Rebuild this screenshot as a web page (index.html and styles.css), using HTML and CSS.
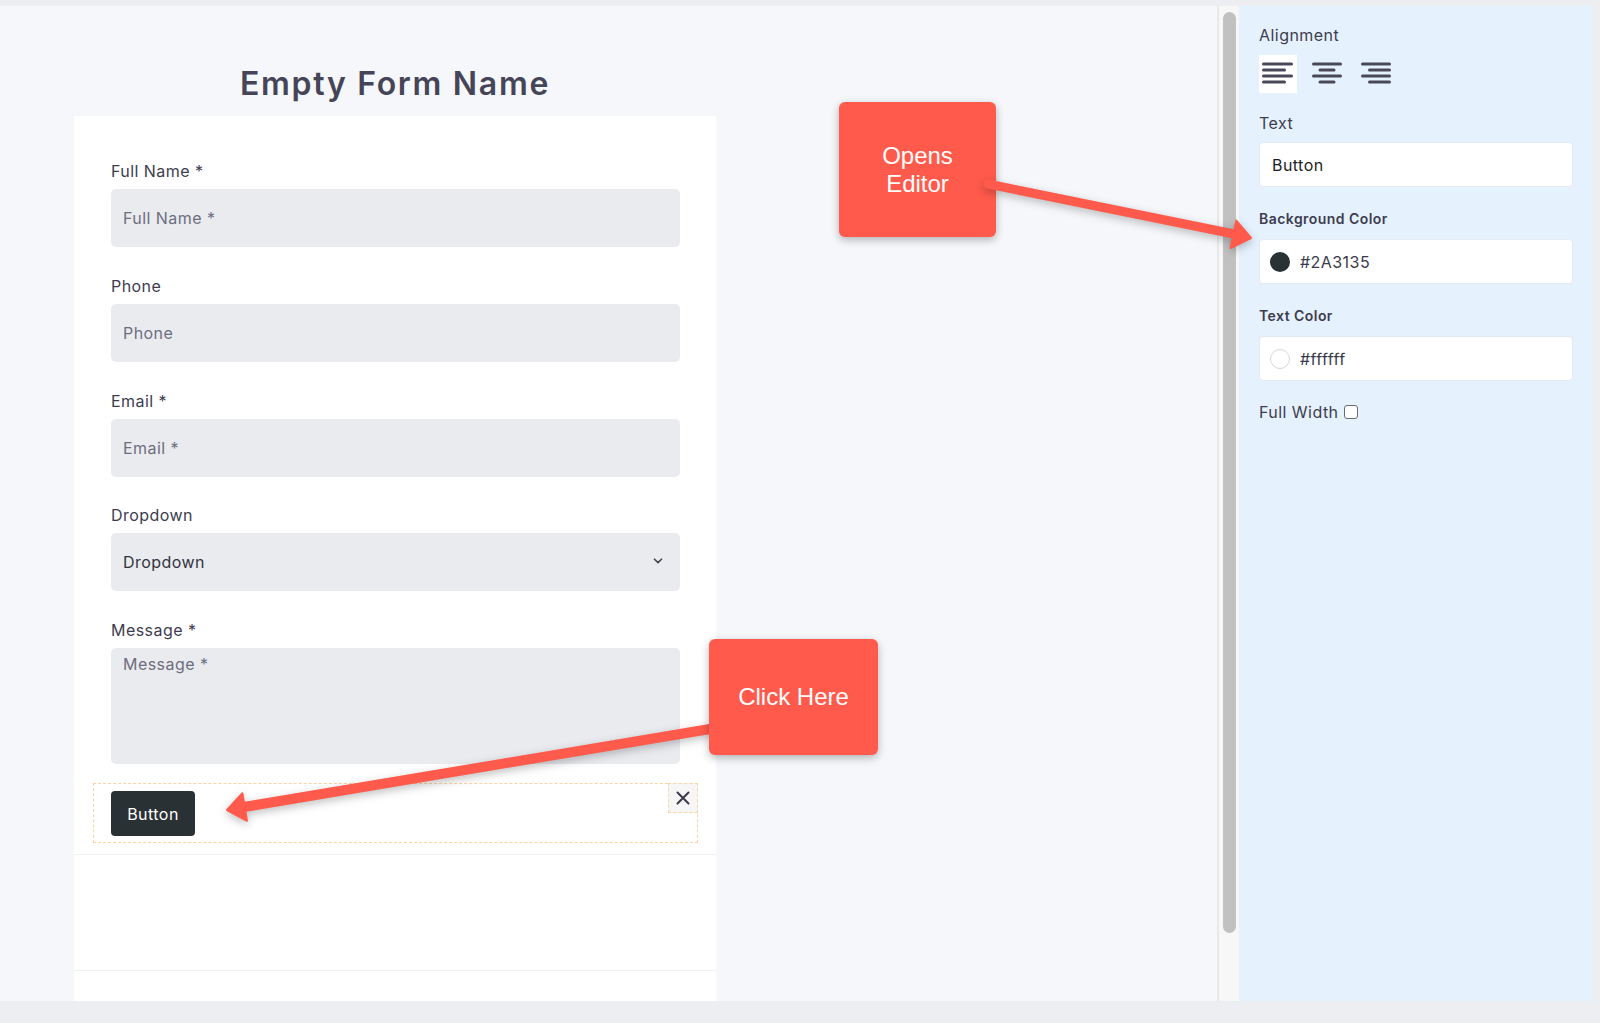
FILE: index.html
```html
<!DOCTYPE html>
<html lang="en">
<head>
<meta charset="utf-8">
<title>Form Builder</title>
<link rel="stylesheet" href="styles.css">
</head>
<body>
<div class="app">
  <div class="topbar"></div>
  <div class="main">
    <div class="canvas">
      <div class="form-col">
        <h1 class="form-title">Empty Form Name</h1>
        <div class="card">
          <div class="form-section">
            <div class="fields">
              <div class="field">
                <div class="label">Full Name *</div>
                <div class="input placeholder">Full Name *</div>
              </div>
              <div class="field">
                <div class="label">Phone</div>
                <div class="input placeholder">Phone</div>
              </div>
              <div class="field">
                <div class="label">Email *</div>
                <div class="input placeholder">Email *</div>
              </div>
              <div class="field">
                <div class="label">Dropdown</div>
                <div class="input select">
                  <span>Dropdown</span>
                  <svg class="chevron" width="10" height="6" viewBox="0 0 10 6"><polyline points="1.5,1.2 5,4.6 8.5,1.2" fill="none" stroke="#44444f" stroke-width="1.6" stroke-linecap="round" stroke-linejoin="round"/></svg>
                </div>
              </div>
              <div class="field">
                <div class="label">Message *</div>
                <div class="input textarea placeholder">Message *</div>
              </div>
            </div>
            <div class="button-row">
              <button class="btn" type="button">Button</button>
              <span class="close">
                <svg width="14" height="14" viewBox="0 0 14 14"><path d="M1.5 1.5 L12.5 12.5 M12.5 1.5 L1.5 12.5" stroke="#3b3b4b" stroke-width="2" stroke-linecap="round"/></svg>
              </span>
            </div>
          </div>
          <div class="card-section"></div>
          <div class="card-rest"></div>
        </div>
      </div>
    </div>
    <div class="scroll"><div class="thumb"></div></div>
    <aside class="panel">
      <div class="plabel">Alignment</div>
      <div class="align-row">
        <span class="align-btn active">
          <svg width="38" height="38" viewBox="0 0 38 38"><rect x="3" y="7.5" width="31" height="3" rx="1.5"/><rect x="3" y="13.5" width="24" height="3" rx="1.5"/><rect x="3" y="19.5" width="31" height="3" rx="1.5"/><rect x="3" y="25.5" width="24" height="3" rx="1.5"/></svg>
        </span>
        <span class="align-btn">
          <svg width="38" height="38" viewBox="0 0 38 38"><rect x="4" y="7.5" width="30" height="3" rx="1.5"/><rect x="10.5" y="13.5" width="17" height="3" rx="1.5"/><rect x="4" y="19.5" width="30" height="3" rx="1.5"/><rect x="10.5" y="25.5" width="17" height="3" rx="1.5"/></svg>
        </span>
        <span class="align-btn">
          <svg width="38" height="38" viewBox="0 0 38 38"><rect x="4" y="7.5" width="30" height="3" rx="1.5"/><rect x="11" y="13.5" width="23" height="3" rx="1.5"/><rect x="4" y="19.5" width="30" height="3" rx="1.5"/><rect x="11" y="25.5" width="23" height="3" rx="1.5"/></svg>
        </span>
      </div>
      <div class="plabel text-label">Text</div>
      <div class="pinput">Button</div>
      <div class="blabel">Background Color</div>
      <div class="pinput color"><span class="swatch dark"></span><span>#2A3135</span></div>
      <div class="blabel">Text Color</div>
      <div class="pinput color"><span class="swatch light"></span><span>#ffffff</span></div>
      <div class="fullwidth">Full Width <span class="checkbox"></span></div>
    </aside>
  </div>
</div>

<div class="note note-editor">Opens<br>Editor</div>
<svg class="arrows" width="1600" height="1023" viewBox="0 0 1600 1023">
  <g fill="#ff5a4b" stroke="#ff5a4b">
    <line x1="988" y1="184" x2="1234" y2="234" stroke-width="9" stroke-linecap="round"/>
    <polygon points="1251,238 1236.3,220.6 1230.5,248" stroke-width="2" stroke-linejoin="round"/>
    <line x1="716" y1="728" x2="244" y2="807" stroke-width="10" stroke-linecap="round"/>
    <polygon points="227,810 242.4,793.2 247,820.8" stroke-width="2" stroke-linejoin="round"/>
  </g>
</svg>
<div class="note note-click">Click Here</div>
</body>
</html>
```
FILE: styles.css
```css
* { box-sizing: border-box; }
html, body { margin: 0; padding: 0; }
body {
  width: 1600px;
  height: 1023px;
  background: #eceef2;
  font-family: "Inter", "Noto Sans", sans-serif;
  color: #3d3d4f;
  position: relative;
  overflow: hidden;
}
.app { width: 1592px; }
.topbar { height: 6px; }
.main {
  display: flex;
  height: 995px;
}
.canvas {
  width: 1219px;
  background: #f5f7fa;
  border-right: 2px solid #e7e8ea;
  padding: 58px 0 0 74px;
  display: flex;
}
.form-col {
  width: 642px;
  display: flex;
  flex-direction: column;
}
.form-title {
  margin: 0 0 12px;
  font-size: 32px;
  line-height: 40px;
  font-weight: 600;
  letter-spacing: 1.7px;
  text-align: center;
  color: #454557;
}
.card {
  flex: 1;
  background: #fff;
  display: flex;
  flex-direction: column;
}
.form-section {
  padding: 43px 36px 11px 37px;
  border-bottom: 1px solid #f0f1f3;
}
.fields {
  display: flex;
  flex-direction: column;
  gap: 26.75px;
}
.label {
  font-size: 16px;
  line-height: 24px;
  margin-bottom: 6px;
  letter-spacing: 0.45px;
  color: #3d3d4f;
}
.input {
  height: 58px;
  background: #e9ebef;
  border-radius: 5px;
  padding: 0 12px;
  display: flex;
  align-items: center;
  font-size: 16px;
  letter-spacing: 0.45px;
  color: #333340;
}
.placeholder { color: #6e6e7e; }
.select { justify-content: space-between; padding-right: 17px; }
.chevron { margin-top: -2px; }
.textarea {
  height: 116px;
  align-items: flex-start;
  padding-top: 6px;
}
.button-row {
  position: relative;
  margin: 19px -18px 0;
  height: 60px;
  border: 1px dashed #fcd4a2;
  padding: 7px 17px;
}
.btn {
  width: 84px;
  height: 45px;
  background: #2a3135;
  color: #fff;
  border: 0;
  border-radius: 4px;
  font-family: "Inter", "Noto Sans", sans-serif;
  font-size: 16px;
  font-weight: 400;
  letter-spacing: 0.45px;
  padding: 0;
}
.close {
  position: absolute;
  top: -1px;
  right: -1px;
  width: 30px;
  height: 30px;
  background: #f6f6f7;
  border: 1px dashed #fcd4a2;
  display: flex;
  align-items: center;
  justify-content: center;
}
.card-section {
  height: 116px;
  border-bottom: 1px solid #f0f1f3;
}
.card-rest { flex: 1; }

.scroll {
  width: 20px;
  background: #f7f7f7;
  padding: 6px 3px 0 4px;
}
.thumb {
  width: 13px;
  height: 921px;
  background: #c1c1c1;
  border-radius: 7px;
}

.panel {
  width: 353px;
  background: #e6f1fe;
  padding: 17px 19px 0 20px;
  letter-spacing: 0.45px;
}
.plabel {
  font-size: 16px;
  line-height: 24px;
  color: #3d3d4f;
}
.align-row {
  display: flex;
  gap: 11px;
  margin-top: 8px;
}
.align-btn {
  width: 38px;
  height: 38px;
  display: block;
}
.align-btn svg { display: block; fill: #484858; }
.align-btn.active { background: #fff; }
.text-label { margin-top: 18px; }
.pinput {
  height: 45px;
  margin-top: 7px;
  background: #fff;
  border: 1px solid #e4eaf1;
  border-radius: 4px;
  padding: 0 12px;
  display: flex;
  align-items: center;
  font-size: 16px;
  color: #1d1d24;
}
.blabel {
  margin-top: 22px;
  font-size: 14px;
  line-height: 20px;
  font-weight: 600;
  color: #3d3d4f;
}
.blabel + .pinput { margin-top: 10px; }
.pinput.color {
  padding-left: 10px;
  gap: 10px;
  color: #3a3a4a;
}
.swatch {
  width: 20px;
  height: 20px;
  border-radius: 50%;
  display: block;
}
.swatch.dark { background: #2a3135; }
.swatch.light { background: #fff; border: 1px solid #d6d8dc; }
.fullwidth {
  margin-top: 19px;
  font-size: 16px;
  line-height: 24px;
  color: #3d3d4f;
  display: flex;
  align-items: center;
  gap: 6px;
}
.checkbox {
  width: 14px;
  height: 14px;
  border: 1.5px solid #6b6b74;
  border-radius: 3px;
  background: #fff;
  display: block;
}

.note {
  position: absolute;
  background: #ff5a4b;
  color: #fff;
  font-family: "Liberation Sans", Arial, sans-serif;
  font-size: 24px;
  line-height: 28px;
  border-radius: 6px;
  box-shadow: 0 3px 8px rgba(0, 0, 0, 0.28);
  display: flex;
  align-items: center;
  justify-content: center;
  text-align: center;
}
.note-editor {
  left: 839px;
  top: 102px;
  width: 157px;
  height: 135px;
  z-index: 1;
}
.note-click {
  left: 709px;
  top: 639px;
  width: 169px;
  height: 116px;
  z-index: 3;
}
.arrows {
  position: absolute;
  left: 0;
  top: 0;
  z-index: 2;
  pointer-events: none;
  filter: drop-shadow(0 3px 4px rgba(0, 0, 0, 0.25));
}
```
